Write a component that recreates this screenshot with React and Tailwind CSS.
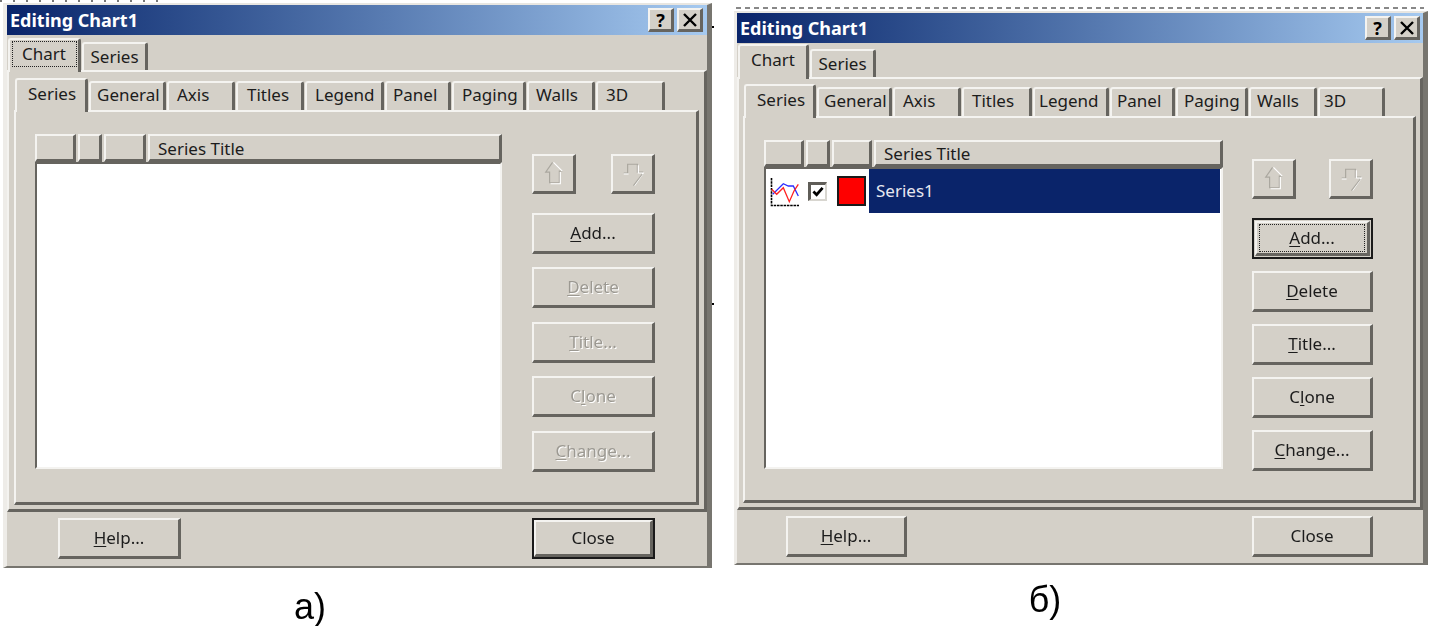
const FONT = "[font-family:'Noto_Sans','Liberation_Sans',sans-serif]";

function Bevel({ className = "", children }) {
  return (
    <div className={"box-border flex items-center justify-center border-t-2 border-l-2 border-b-[3px] border-r-[3px] border-t-[#f4f3f0] border-l-[#f4f3f0] border-b-[#66645f] border-r-[#66645f] bg-[#d4d0c8] text-[17px] text-[#1c1c1c] " + className}>
      {children}
    </div>
  );
}

function ActionButton({ under, rest, disabled, className = "", focus, isDefault, tall = "h-[41px]" }) {
  const text = (
    <span className={disabled ? "text-[#9c9992] [text-shadow:1px_1px_0_#ffffff]" : ""}>
      {under ? <u className="underline-offset-2">{under}</u> : null}
      {rest}
    </span>
  );
  if (isDefault) {
    return (
      <div className={"box-border border-2 border-[#1a1a1a] " + tall + " " + className}>
        <Bevel className="h-full w-full">{text}</Bevel>
      </div>
    );
  }
  if (focus) {
    return (
      <div className={"box-border border-2 border-[#1a1a1a] p-[1px] " + tall + " " + className}>
        <Bevel className="h-full w-full border-b-2 border-r-2">
          <span className="flex h-[28px] w-[106px] items-center justify-center border border-dotted border-[#222222]">{text}</span>
        </Bevel>
      </div>
    );
  }
  return <Bevel className={tall + " " + className}>{text}</Bevel>;
}

function UpIcon() {
  return (
    <svg width="40" height="36" viewBox="0 0 40 36" fill="none" strokeWidth="1.2">
      <path d="M19 6 L12 16 H16 V27 H26 V15 H29" stroke="#aaa79f" />
      <path d="M20 6 L29 15 M17 28 H27 V16" stroke="#ffffff" />
    </svg>
  );
}

function DownIcon() {
  return (
    <svg width="40" height="36" viewBox="0 0 40 36" fill="none" strokeWidth="1.2">
      <path d="M11 17 H15 V8 H25 V16 H31" stroke="#aaa79f" />
      <path d="M11 18 H16 M26 9 V17 H31 L22 30" stroke="#ffffff" />
      <path d="M30 18 L21 30" stroke="#aaa79f" />
    </svg>
  );
}

function OuterTab({ label, selected, focus, className }) {
  return (
    <div
      className={
        "box-border flex items-center justify-center rounded-t-[3px] border-t-2 border-l-2 border-r-[3px] border-t-[#f4f3f0] border-l-[#f4f3f0] border-r-[#66645f] bg-[#d4d0c8] text-[17px] text-[#1c1c1c] " +
        (selected ? "relative z-10 -mb-[2px] " : "") +
        className
      }
    >
      {focus ? (
        <span className="flex h-[26px] w-[65px] items-center justify-center border border-dotted border-[#222222]">{label}</span>
      ) : (
        label
      )}
    </div>
  );
}

function TitleBar({ btnMargin }) {
  return (
    <div className="flex h-[30px] shrink-0 items-center bg-gradient-to-r from-[#0a246a] to-[#a6caf0] pl-[3px]">
      <span className="text-[18px] font-bold leading-none text-white">Editing Chart1</span>
      <div className={"ml-auto flex gap-[3px] " + btnMargin}>
        <Bevel className="h-[24px] w-[26px] text-[18px] font-bold leading-none !text-black">?</Bevel>
        <Bevel className="h-[24px] w-[26px]">
          <svg width="16" height="14" viewBox="0 0 16 14" stroke="#000" strokeWidth="2.4" fill="none">
            <path d="M2 1 L14 13 M14 1 L2 13" />
          </svg>
        </Bevel>
      </div>
    </div>
  );
}

function Arrows({ className }) {
  return (
    <div className={"flex justify-between " + className}>
      <Bevel className="h-[40px] w-[44px]"><UpIcon /></Bevel>
      <Bevel className="h-[40px] w-[44px]"><DownIcon /></Bevel>
    </div>
  );
}

function Header({ cols, className }) {
  return (
    <div className={"flex shrink-0 gap-[2px] " + className}>
      {cols.map((c, i) => (
        <Bevel key={i} className={"h-full justify-start pl-2 pt-[2px] " + c.w}>{c.t}</Bevel>
      ))}
    </div>
  );
}

const W1 = ["w-[73px]", "w-[77px]", "w-[68px]", "w-[68px]", "w-[79px]", "w-[66px]", "w-[74px]", "w-[68px]", "w-[69px]"];
const P1 = ["pl-[11px]", "pl-[6px]", "pl-[8px]", "pl-[9px]", "pl-[8px]", "pl-[6px]", "pl-[8px]", "pl-[7px]", "pl-[8px]"];
const W2 = ["w-[72px]", "w-[75px]", "w-[68px]", "w-[70px]", "w-[76px]", "w-[65px]", "w-[72px]", "w-[68px]", "w-[67px]"];
const P2 = ["pl-[11px]", "pl-[5px]", "pl-[8px]", "pl-[8px]", "pl-[4px]", "pl-[5px]", "pl-[6px]", "pl-[6px]", "pl-[4px]"];
const NAMES = ["Series", "General", "Axis", "Titles", "Legend", "Panel", "Paging", "Walls", "3D"];

function InnerTabs({ widths, pads, className }) {
  return (
    <div className={"flex items-end gap-[1px] " + className}>
      {NAMES.map((n, i) => (
        <div
          key={n}
          className={
            "box-border flex items-center rounded-t-[3px] border-t-2 border-l-2 border-r-[3px] border-t-[#f4f3f0] border-l-[#f4f3f0] border-r-[#66645f] bg-[#d4d0c8] text-[17px] text-[#1c1c1c] " +
            widths[i] + " " + pads[i] +
            (i === 0 ? " relative z-10 h-[34px] -mb-[2px] pb-[5px]" : " h-[29px] pb-[3px]")
          }
        >
          {n}
        </div>
      ))}
    </div>
  );
}

const PANEL = "box-border flex border-t-2 border-l-2 border-r-[3px] border-b-[3px] border-t-[#f4f3f0] border-l-[#f4f3f0] border-r-[#66645f] border-b-[#66645f]";
const PAGE = "box-border border-t-2 border-l-2 border-r-[3px] border-b-[3px] border-t-[#f4f3f0] border-l-[#f4f3f0] border-r-[#66645f] border-b-[#66645f]";
const LIST = "box-border border-t-2 border-l-2 border-r-2 border-b-2 border-t-[#66645f] border-l-[#66645f] border-r-[#f4f3f0] border-b-[#f4f3f0] bg-white";

function LeftDialog() {
  return (
    <div className={"box-border flex h-[565px] w-[709px] shrink-0 flex-col border-t-2 border-l-[4px] border-r-[5px] border-b-2 border-t-[#e8e6e1] border-l-[#eeece8] border-r-[#77756f] border-b-[#77756f] bg-[#d4d0c8] " + FONT}>
      <TitleBar btnMargin="mr-[4px]" />
      <div className="flex h-[35px] shrink-0 items-end pl-[1px]">
        <OuterTab label="Chart" selected focus className="h-[34px] w-[73px] pb-[4px]" />
        <OuterTab label="Series" className="ml-[1px] h-[28px] w-[66px]" />
      </div>
      <div className={"h-[442px] shrink-0 pl-[5px] pt-[5px] " + PAGE}>
        <InnerTabs widths={W1} pads={P1} className="h-[33px] pl-[1px]" />
        <div className={"h-[395px] w-[685px] " + PANEL}>
          <div className="ml-[19px] mt-[22px] flex w-[467px] flex-col">
            <Header
              className="h-[28px]"
              cols={[{ w: "w-[41px]" }, { w: "w-[24px]" }, { w: "w-[42px]" }, { w: "flex-1", t: "Series Title" }]}
            />
            <div className={"h-[307px] " + LIST} />
          </div>
          <div className="ml-[30px] mt-[22px] flex w-[123px] flex-col">
            <Arrows className="mt-[20px]" />
            <div className="mt-[18.6px] flex flex-col gap-[13.5px]">
              <ActionButton under="A" rest="dd..." />
              <ActionButton under="D" rest="elete" disabled />
              <ActionButton under="T" rest="itle..." disabled />
              <ActionButton rest={<>C<u className="underline-offset-2">l</u>one</>} disabled />
              <ActionButton under="C" rest="hange..." disabled />
            </div>
          </div>
        </div>
      </div>
      <div className="flex flex-1 items-start pl-[51px] pr-[52px] pt-[6px]">
        <ActionButton under="H" rest="elp..." className="w-[123px]" />
        <ActionButton rest="Close" isDefault className="ml-auto w-[123px]" />
      </div>
    </div>
  );
}

function RightDialog() {
  return (
    <div className={"box-border flex h-[554px] w-[694px] shrink-0 flex-col border-t-2 border-l-[3px] border-r-[5px] border-b-2 border-t-[#e8e6e1] border-l-[#eeece8] border-r-[#77756f] border-b-[#77756f] bg-[#d4d0c8] " + FONT}>
      <TitleBar btnMargin="mr-[3px]" />
      <div className="flex h-[34px] shrink-0 items-end pl-[1px]">
        <OuterTab label="Chart" selected className="h-[35px] w-[71px] pb-[5px]" />
        <OuterTab label="Series" className="ml-[1px] h-[28px] w-[66px]" />
      </div>
      <div className={"h-[433px] shrink-0 pl-[4px] pt-[5px] " + PAGE}>
        <InnerTabs widths={W2} pads={P2} className="h-[32px] pl-[1px]" />
        <div className={"h-[387px] w-[673px] " + PANEL}>
          <div className="ml-[19px] mt-[22px] flex w-[459px] flex-col">
            <Header
              className="h-[27px]"
              cols={[{ w: "w-[40px]" }, { w: "w-[24px]" }, { w: "w-[40px]" }, { w: "flex-1", t: "Series Title" }]}
            />
            <div className={"h-[302px] " + LIST}>
              <div className="flex h-[44px] items-center">
                <svg className="ml-[4px] shrink-0" width="32" height="36" viewBox="0 0 32 36" fill="none">
                  <path d="M1.5 5 V32.5 H29" stroke="#000" strokeWidth="1.6" strokeDasharray="2.5 0.8" />
                  <path d="M2.7 21.3 L13.3 10.7 L18.3 13 L23.3 13 L28.3 23" stroke="#2b2bff" strokeWidth="1.3" />
                  <path d="M1.7 16.3 L6.7 21.3 L13.3 14.7 L19.3 28.7 L24 18 L28.3 11.3" stroke="#ff2020" strokeWidth="1.3" />
                </svg>
                <div className="ml-[6px] box-border flex h-[19px] w-[19px] shrink-0 items-center justify-center border-t-[3px] border-l-[3px] border-r-2 border-b-2 border-t-[#5f5d58] border-l-[#5f5d58] border-r-[#d8d6d0] border-b-[#d8d6d0] bg-white">
                  <svg width="12" height="11" viewBox="0 0 13 12" fill="none" stroke="#000" strokeWidth="3">
                    <path d="M1.5 6 L5 9.5 L11.5 2" />
                  </svg>
                </div>
                <div className="ml-[10px] box-border h-[30px] w-[29px] shrink-0 border-2 border-[#1a1a1a] bg-[#fe0000]" />
                <div className="ml-[3px] flex h-full w-[351px] items-center bg-[#0a246a] pl-[7px] text-[17px] text-[#e8e8f0]">Series1</div>
              </div>
            </div>
          </div>
          <div className="ml-[29px] mt-[22px] flex w-[121px] flex-col">
            <Arrows className="mt-[19px]" />
            <div className="mt-[19px] flex flex-col gap-[12px]">
              <ActionButton under="A" rest="dd..." focus />
              <ActionButton under="D" rest="elete" />
              <ActionButton under="T" rest="itle..." />
              <ActionButton rest={<>C<u className="underline-offset-2">l</u>one</>} />
              <ActionButton under="C" rest="hange..." />
            </div>
          </div>
        </div>
      </div>
      <div className="flex flex-1 items-start pl-[49px] pr-[50px] pt-[6px]">
        <ActionButton under="H" rest="elp..." className="w-[121px]" />
        <ActionButton rest="Close" className="ml-auto w-[121px]" />
      </div>
    </div>
  );
}

function Caption({ children, className }) {
  return <div className={"text-center text-[36px] leading-none text-black [font-family:'Liberation_Sans',Arial,sans-serif] " + className}>{children}</div>;
}

export default function App() {
  return (
    <div className="relative flex h-[626px] w-[1429px] overflow-hidden bg-white">
      <div className="absolute left-0 top-0 h-[2px] w-[168px] bg-[repeating-linear-gradient(90deg,#777777_0,#777777_2px,transparent_2px,transparent_13px)]" />
      <div className="absolute left-[736px] top-[7px] h-[2px] w-[688px] bg-[repeating-linear-gradient(90deg,#888888_0,#888888_5px,transparent_5px,transparent_9px)]" />
      <div className="absolute left-[712px] top-[26px] h-[2px] w-[2px] bg-black" />
      <div className="absolute left-[712px] top-[303px] h-[2px] w-[2px] bg-black" />
      <div className="w-[712px] shrink-0 pl-[3px] pt-[3px] blur-[0.4px]">
        <LeftDialog />
        <Caption className="mr-[95px] mt-[21px]">а)</Caption>
      </div>
      <div className="shrink-0 pl-[22px] pt-[11px] blur-[0.4px]">
        <RightDialog />
        <Caption className="mr-[72px] mt-[17px]">б)</Caption>
      </div>
    </div>
  );
}
